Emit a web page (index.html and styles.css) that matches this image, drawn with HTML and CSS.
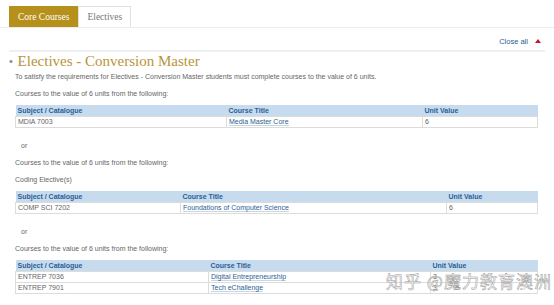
FILE: index.html
```html
<!DOCTYPE html>
<html lang="en">
<head>
  <meta charset="UTF-8" />
  <meta name="viewport" content="width=device-width, initial-scale=1.0"/>
  <title>Program Rules - Electives</title>
  <link rel="stylesheet" href="styles.css">
</head>
<body>

  <div class="tabs">
    <span class="tab active">Core Courses</span>
    <span class="tab">Electives</span>
  </div>

  <div class="toolbar">
    <a class="close-all" href="#">Close all <span class="arrow"></span></a>
  </div>

  <div class="section">
    <h2 class="section-title"><span class="bullet">&bull;</span> Electives - Conversion Master</h2>

    <p>To satisfy the requirements for Electives - Conversion Master students must complete courses to the value of 6 units.</p>
    <p>Courses to the value of 6 units from the following:</p>

    <table class="courses t1">
      <tr><th>Subject / Catalogue</th><th>Course Title</th><th>Unit Value</th></tr>
      <tr><td>MDIA 7003</td><td><a href="#">Media Master Core</a></td><td>6</td></tr>
    </table>

    <div class="or">or</div>

    <p>Courses to the value of 6 units from the following:</p>
    <p>Coding Elective(s)</p>

    <table class="courses t2">
      <tr><th>Subject / Catalogue</th><th>Course Title</th><th>Unit Value</th></tr>
      <tr><td>COMP SCI 7202</td><td><a href="#">Foundations of Computer Science</a></td><td>6</td></tr>
    </table>

    <div class="or">or</div>

    <p>Courses to the value of 6 units from the following:</p>

    <table class="courses t3">
      <tr><th>Subject / Catalogue</th><th>Course Title</th><th>Unit Value</th></tr>
      <tr><td>ENTREP 7036</td><td><a href="#">Digital Entrepreneurship</a></td><td>3</td></tr>
      <tr><td>ENTREP 7901</td><td><a href="#">Tech eChallenge</a></td><td>3</td></tr>
    </table>
  </div>

  <div class="watermark">知乎 @魔力教育澳洲</div>

</body>
</html>
```

FILE: styles.css
```css
body {
  margin: 0;
  font-family: "Liberation Sans", Arial, sans-serif;
  font-size: 7px;
  color: #666;
  background: #fff;
  width: 554px;
  height: 305px;
  overflow: hidden;
  position: relative;
}

a {
  color: #2b5e94;
  text-decoration: none;
}

.tabs {
  display: flex;
  align-items: flex-end;
  padding: 6px 0 0 9px;
  height: 21px;
  border-bottom: 1px solid #ececec;
}

.tab {
  font-family: "Liberation Serif", "Times New Roman", serif;
  font-size: 9.5px;
  padding: 0 8px;
  height: 20px;
  line-height: 20px;
  color: #777;
  border: 1px solid #e2e2e2;
  border-bottom: none;
  background: #fff;
}

.tab.active {
  background: #b5901b;
  border-color: #b5901b;
  color: #fff;
}

.toolbar {
  display: flex;
  justify-content: flex-end;
  margin: 0 9px;
  padding: 9px 4px 3px 0;
  border-bottom: 2px solid #edf0f3;
}

.close-all {
  font-size: 7.5px;
  line-height: 10px;
}

.arrow {
  display: inline-block;
  width: 0;
  height: 0;
  margin-left: 5px;
  border-left: 3.5px solid transparent;
  border-right: 3.5px solid transparent;
  border-bottom: 4px solid #c0182c;
  vertical-align: 1px;
}

.section {
  padding: 0 16px 0 15px;
}

.section-title {
  margin: 1px 0 2px -6px;
  font-family: "Liberation Serif", "Times New Roman", serif;
  font-weight: normal;
  font-size: 15px;
  line-height: 16px;
  color: #b8953a;
}

.bullet {
  font-family: "Liberation Sans", Arial, sans-serif;
  font-size: 11px;
  color: #8a8a8a;
  vertical-align: 1px;
  margin-right: 1px;
}

p {
  margin: 0 0 6px;
  line-height: 11px;
}

.or {
  margin: 12px 0 6px;
  padding-left: 6px;
  line-height: 11px;
}

.courses {
  width: 100%;
  border-collapse: collapse;
  table-layout: fixed;
}

.courses th {
  background: #c6dbee;
  color: #2b5e94;
  font-weight: bold;
  text-align: left;
  height: 11px;
  padding: 0 2px;
  line-height: 11px;
}

.courses td {
  border: 1px solid #dcdcdc;
  height: 10px;
  padding: 0 2px;
  line-height: 10px;
}

.courses td a {
  border-bottom: 1px solid #c9d6e3;
}

.t1 th:nth-child(1) { width: 207px; }
.t1 th:nth-child(2) { width: 192px; }

.t2 th:nth-child(1) { width: 161px; }
.t2 th:nth-child(2) { width: 262px; }

.t3 th:nth-child(1) { width: 189px; }
.t3 th:nth-child(2) { width: 218px; }

.watermark {
  position: absolute;
  left: 386px;
  top: 268px;
  font-family: "Noto Sans CJK SC", sans-serif;
  font-size: 17px;
  letter-spacing: 1px;
  color: rgba(255, 255, 255, 0.6);
  -webkit-text-stroke: 0.5px #9a9a9a;
}
```
